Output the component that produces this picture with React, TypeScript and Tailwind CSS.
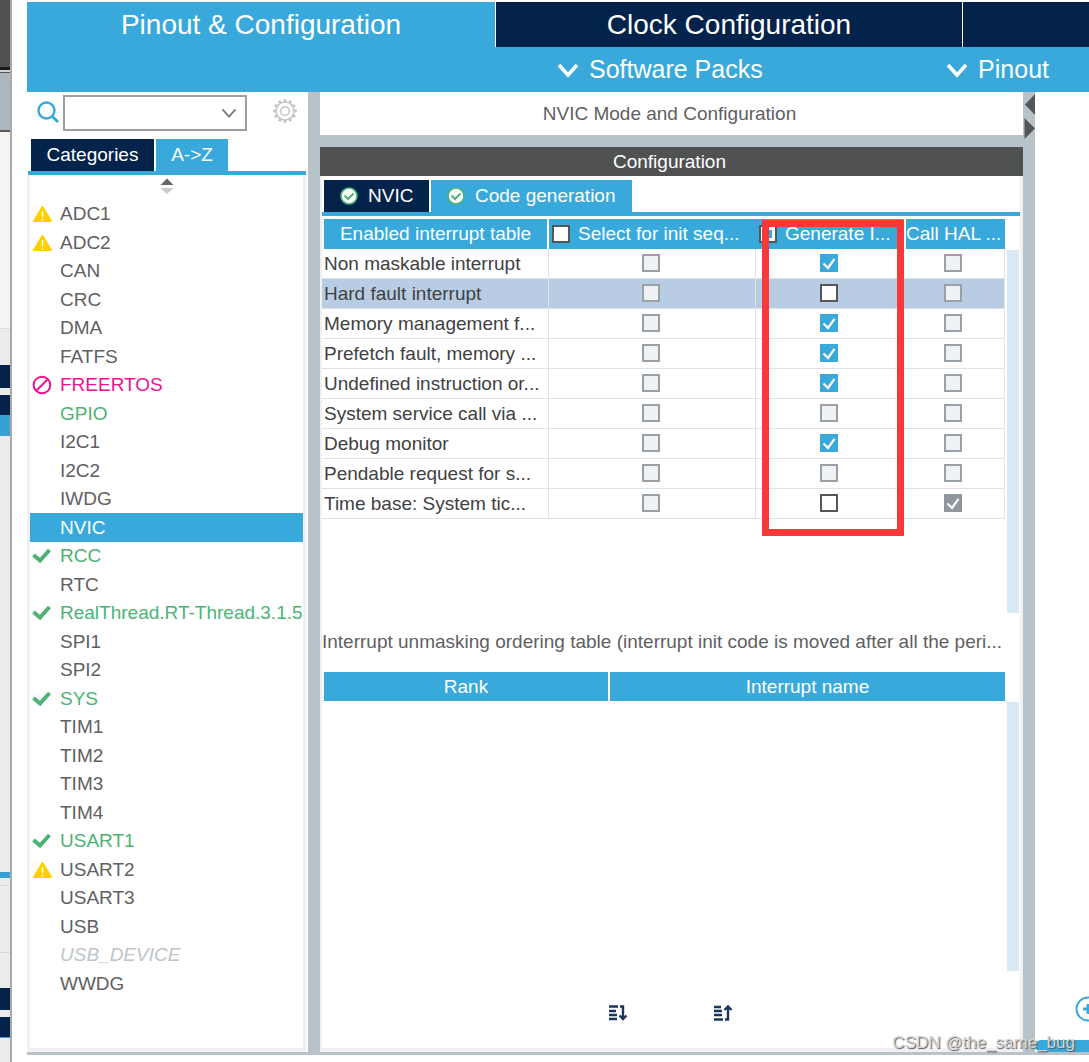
import React from "react";

type Mark = "warn" | "ok" | "no";
type Peripheral = { name: string; mark?: Mark; tone?: string };

const peripherals: Peripheral[] = [
  { name: "ADC1", mark: "warn" },
  { name: "ADC2", mark: "warn" },
  { name: "CAN" },
  { name: "CRC" },
  { name: "DMA" },
  { name: "FATFS" },
  { name: "FREERTOS", mark: "no", tone: "text-[#ec1390]" },
  { name: "GPIO", tone: "text-[#4db374]" },
  { name: "I2C1" },
  { name: "I2C2" },
  { name: "IWDG" },
  { name: "NVIC", tone: "bg-[#39a9dc] text-white" },
  { name: "RCC", mark: "ok", tone: "text-[#4db374]" },
  { name: "RTC" },
  { name: "RealThread.RT-Thread.3.1.5", mark: "ok", tone: "text-[#4db374]" },
  { name: "SPI1" },
  { name: "SPI2" },
  { name: "SYS", mark: "ok", tone: "text-[#4db374]" },
  { name: "TIM1" },
  { name: "TIM2" },
  { name: "TIM3" },
  { name: "TIM4" },
  { name: "USART1", mark: "ok", tone: "text-[#4db374]" },
  { name: "USART2", mark: "warn" },
  { name: "USART3" },
  { name: "USB" },
  { name: "USB_DEVICE", tone: "italic text-[#bcc5ca]" },
  { name: "WWDG" },
];

type Box = "on" | "off" | "dim" | "dimOn";
const interrupts: { name: string; boxes: [Box, Box, Box] }[] = [
  { name: "Non maskable interrupt", boxes: ["dim", "on", "dim"] },
  { name: "Hard fault interrupt", boxes: ["dim", "off", "dim"] },
  { name: "Memory management f...", boxes: ["dim", "on", "dim"] },
  { name: "Prefetch fault, memory ...", boxes: ["dim", "on", "dim"] },
  { name: "Undefined instruction or...", boxes: ["dim", "on", "dim"] },
  { name: "System service call via ...", boxes: ["dim", "dim", "dim"] },
  { name: "Debug monitor", boxes: ["dim", "on", "dim"] },
  { name: "Pendable request for s...", boxes: ["dim", "dim", "dim"] },
  { name: "Time base: System tic...", boxes: ["dim", "off", "dimOn"] },
];
const columnNames = ["Select for init sequence ordering", "Generate IRQ handler", "Call HAL handler"];

function MarkIcon({ mark }: { mark?: Mark }) {
  if (mark === "warn")
    return (
      <svg viewBox="0 0 20 18" className="h-[18px] w-5" aria-hidden="true">
        <path d="M10.500 2 L19 16 H2 Z" fill="#ffd000" stroke="#ffd000" strokeWidth="2" strokeLinejoin="round" />
        <path d="M10.500 6 V12 M10.500 13.500 V15.500" stroke="#fff" strokeWidth="1.4" />
      </svg>
    );
  if (mark === "ok")
    return (
      <svg viewBox="0 0 20 18" className="h-[18px] w-5" aria-hidden="true">
        <path d="M1.500 8 L8 13.500 L17.500 3" fill="none" stroke="#4db374" strokeWidth="4" />
      </svg>
    );
  if (mark === "no")
    return (
      <svg viewBox="0 0 20 20" className="h-5 w-5" aria-hidden="true">
        <circle cx="10" cy="10" r="8.3" fill="none" stroke="#ec1390" strokeWidth="2" />
        <path d="M4.500 15.500 L15.500 4.500" stroke="#ec1390" strokeWidth="2" />
      </svg>
    );
  return null;
}

function CheckBox({ kind, label }: { kind: Box; label: string }) {
  const on = kind === "on" || kind === "dimOn";
  const look =
    kind === "on"
      ? "border-[#39a9dc] bg-[#39a9dc]"
      : kind === "off"
        ? "border-[#555657] bg-white"
        : kind === "dim"
          ? "border-[#9aa1a6] bg-[#f0f1f4]"
          : "border-[#8f979e] bg-[#8f979e]";
  return (
    <span className="inline-grid align-middle">
      <input
        type="checkbox"
        aria-label={label}
        defaultChecked={on}
        disabled={kind === "dim" || kind === "dimOn"}
        className={`col-start-1 row-start-1 size-[18px] appearance-none border-2 ${look}`}
      />
      {on && (
        <svg viewBox="0 0 18 18" className="pointer-events-none col-start-1 row-start-1 size-[18px]" aria-hidden="true">
          <path d="M3.5 9.5 L8 14 L14.5 4.8" fill="none" stroke="#fff" strokeWidth="2.2" />
        </svg>
      )}
    </span>
  );
}

function Chevron({ className, thin }: { className: string; thin?: boolean }) {
  return (
    <svg viewBox="0 0 22 16" className={className} aria-hidden="true">
      <path d="M2 3 L11 13 L20 3" fill="none" stroke="currentColor" strokeWidth={thin ? 2.6 : 3.6} />
    </svg>
  );
}

function TabSeal() {
  return (
    <svg viewBox="0 0 18 18" className="size-[18px]" aria-hidden="true">
      <circle cx="9" cy="9" r="8" fill="#fff" stroke="#4db374" strokeWidth="1.6" />
      <path d="M4.5 8.5 L8 12 L13.5 6.5" fill="none" stroke="#4db374" strokeWidth="2" />
    </svg>
  );
}

function Gear() {
  const teeth = Array.from({ length: 12 }, (_, i) => i * 30);
  return (
    <svg viewBox="0 0 24 24" className="size-6" fill="none" stroke="#c6c6c6" strokeWidth="1.6" aria-hidden="true">
      <circle cx="12" cy="12" r="9" />
      <circle cx="12" cy="12" r="4.3" />
      {teeth.map((a) => (
        <path key={a} d="M12 3 V0.2" strokeWidth="2.8" transform={`rotate(${a} 12 12)`} />
      ))}
    </svg>
  );
}

function WindowBehind() {
  return (
    <div className="flex w-3 flex-none flex-col border-r-2 border-[#a9a9a9] bg-[#ececec]" aria-hidden="true">
      <div className="h-[67px] bg-[#505251]" />
      <div className="h-[3px] bg-[#1b1b1b]" />
      <div className="h-[3px] border-b border-[#555] bg-[#d0d0d0]" />
      <div className="h-[57px] bg-[#adb7bf]" />
      <div className="h-[2px] bg-[#5a5a5a]" />
      <div className="h-[197px] border-b border-[#dcdcdc] bg-[#f4f4f4]" />
      <div className="h-9" />
      <div className="h-[23px] bg-[#03234b]" />
      <div className="h-[7px]" />
      <div className="h-5 bg-[#03234b]" />
      <div className="h-[21px] bg-[#39a0d3]" />
      <div className="h-[436px]" />
      <div className="h-1.5 bg-[#39a0d3]" />
      <div className="h-2 border-b border-[#d8d8d8]" />
      <div className="h-[67px] border-b border-[#d8d8d8]" />
      <div className="h-[35px]" />
      <div className="h-[22px] bg-[#03234b]" />
      <div className="h-[7px]" />
      <div className="h-[21px] border-b border-[#39a0d3] bg-[#03234b]" />
    </div>
  );
}

function Header() {
  return (
    <header className="flex-none bg-[#39a9dc] text-white">
      <nav className="flex h-[45px] text-[28px] leading-[45px]">
        <button className="w-[468px] flex-none">Pinout &amp; Configuration</button>
        <button className="w-[468px] flex-none border-x border-white bg-[#03234b]">Clock Configuration</button>
        <div className="flex-1 bg-[#03234b]" />
      </nav>
      <div className="flex h-[45px] items-center text-[25px] leading-[45px]">
        <button className="ml-[530px] flex items-center gap-2.5">
          <Chevron className="h-4 w-[22px]" />
          Software Packs
        </button>
        <button className="ml-auto mr-10 flex items-center gap-2.5">
          <Chevron className="h-4 w-[22px]" />
          Pinout
        </button>
      </div>
    </header>
  );
}

function Sidebar() {
  return (
    <aside className="flex w-[281px] flex-none flex-col pr-0.5">
      <div className="flex h-[47px] items-start pl-2.5 pt-[3px]">
        <svg viewBox="0 0 22 22" className="mt-1.5 size-[22px]" fill="none" stroke="#39a9dc" aria-hidden="true">
          <circle cx="9.5" cy="9.5" r="8" strokeWidth="2.4" />
          <path d="M15 15 L21 21" strokeWidth="3" />
        </svg>
        <div className="relative ml-1 w-[184px]">
          <select aria-label="Search peripherals" className="block h-9 w-full appearance-none border-2 border-[#9aa1a6] bg-white" />
          <Chevron thin className="pointer-events-none absolute right-2.5 top-2.5 h-4 w-4 text-[#7d7d7d]" />
        </div>
        <button aria-label="Settings" className="ml-[26px] mt-1">
          <Gear />
        </button>
      </div>
      <div className="flex h-8 gap-0.5 pl-1 text-white">
        <button className="w-[123px] bg-[#03234b]">Categories</button>
        <button className="w-[72px] bg-[#39a9dc]">A-&gt;Z</button>
      </div>
      <div className="ml-px h-1 bg-[#39a9dc]" />
      <div className="flex-1 border-x-3 border-b-4 border-[#f0f1f3]">
        <button aria-label="Sort" className="mx-auto block h-[25px] pb-1">
          <svg viewBox="0 0 14 18" className="h-[18px] w-3.5" aria-hidden="true">
            <path d="M7 1.5 L13.5 8 H0.5 Z" fill="#666" />
            <path d="M0.5 11 H13.5 L7 17 Z" fill="#c9c9c9" />
          </svg>
        </button>
        <ul>
          {peripherals.map((p) => (
            <li key={p.name} className="odd:h-7 even:h-[29px]">
              <button className={`flex h-full w-full items-center whitespace-nowrap pl-0.5 text-left ${p.tone ?? "text-[#5f6062]"}`}>
                <span className="flex w-7 flex-none">
                  <MarkIcon mark={p.mark} />
                </span>
                {p.name}
              </button>
            </li>
          ))}
        </ul>
      </div>
    </aside>
  );
}

function InterruptTable() {
  return (
    <table className="w-full table-fixed border-separate border-spacing-0 whitespace-nowrap">
      <colgroup>
        <col className="w-[227px]" />
        <col className="w-[207px]" />
        <col className="w-[148px]" />
        <col className="w-[101px]" />
      </colgroup>
      <thead className="text-white">
        <tr className="h-[30px]">
          <th className="border-x-2 border-white bg-[#39a9dc] p-0 font-normal">Enabled interrupt table</th>
          <th className="bg-[#39a9dc] p-0 font-normal">
            <label className="flex items-center gap-2 pl-[3px]">
              <input type="checkbox" className="size-[18px] flex-none appearance-none border-2 border-[#555657] bg-white" />
              Select for init seq...
            </label>
          </th>
          <th className="relative bg-[#39a9dc] p-0 font-normal">
            <label className="flex items-center gap-2 pl-[3px]">
              <span className="inline-grid flex-none place-items-center">
                <input type="checkbox" className="col-start-1 row-start-1 size-[18px] appearance-none border-2 border-[#555657] bg-white" />
                <span className="pointer-events-none col-start-1 row-start-1 size-2 bg-[#39a9dc]" />
              </span>
              Generate I...
            </label>
            <div className="pointer-events-none absolute left-1.5 right-0 top-px z-10 h-[316px] border-7 border-[#fb3838]" />
          </th>
          <th className="border-l-2 border-white bg-[#39a9dc] p-0 text-left font-normal">Call HAL ...</th>
        </tr>
      </thead>
      <tbody className="text-[#404143]">
        {interrupts.map((row, i) => (
          <tr key={row.name} className={`h-[30px] ${i === 1 ? "bg-[#b8cde4]" : "bg-white"}`}>
            <td className="border-b border-r border-[#dfe3e8] py-0 pl-0.5 pr-0">{row.name}</td>
            {row.boxes.map((kind, c) => (
              <td key={c} className="border-b border-r border-[#dfe3e8] p-0 pb-0.5 pr-0.5 text-center leading-none">
                <CheckBox kind={kind} label={`${columnNames[c]}: ${row.name}`} />
              </td>
            ))}
          </tr>
        ))}
      </tbody>
    </table>
  );
}

function SortIcon({ up }: { up?: boolean }) {
  return (
    <svg viewBox="0 0 20 18" className="h-[18px] w-5" fill="none" stroke="#1b365d" aria-hidden="true">
      <path d={up ? "M0 3 H7 M0 7 H8 M0 11 H8 M0 15.5 H9" : "M0 2.5 H9 M0 7 H7 M0 11 H8 M0 15 H8"} strokeWidth="2.4" />
      {up ? (
        <path d="M11 15.5 H14 V3 M10.5 6 L14 2.500 L17.500 6" strokeWidth="2.4" />
      ) : (
        <path d="M11 2.500 H14 V14 M10.500 11.500 L14 15 L17.500 11.500" strokeWidth="2.4" />
      )}
    </svg>
  );
}

function Workspace() {
  return (
    <main className="flex min-w-0 flex-1 flex-col bg-[#b7c3c9]">
      <h1 className="h-[43px] flex-none bg-white pr-1 text-center leading-[43px] text-[#5f6062]">NVIC Mode and Configuration</h1>
      <h2 className="mt-3 h-[29px] flex-none bg-[#505251] pr-1 text-center leading-[29px] text-white">Configuration</h2>
      <div className="flex flex-1 flex-col border-b-4 border-l-2 border-r-3 border-[#f0f1f3] bg-white">
        <div className="flex h-9 gap-0.5 pl-0.5 pt-1 text-white">
          <button className="flex w-[105px] items-center gap-2.5 bg-[#03234b] pl-4">
            <TabSeal />
            NVIC
          </button>
          <button className="flex w-[201px] items-center gap-2.5 bg-[#39a9dc] pl-4">
            <TabSeal />
            Code generation
          </button>
        </div>
        <div className="h-1 bg-[#39a9dc]" />
        <div className="flex grow basis-[397px] pr-px pt-[3px]">
          <div className="min-w-0 flex-1">
            <InterruptTable />
          </div>
          <div className="ml-0.5 mt-[31px] w-3 flex-none bg-[#d9e8f5]" />
        </div>
        <p className="h-[59px] flex-none truncate leading-[58px] text-[#5f6062]">
          Interrupt unmasking ordering table (interrupt init code is moved after all the peri...
        </p>
        <div className="flex grow basis-[299px] pr-px">
          <div className="min-w-0 flex-1">
            <table className="w-full table-fixed border-separate border-spacing-0 text-white">
              <colgroup>
                <col className="w-[288px]" />
                <col className="w-[395px]" />
              </colgroup>
              <thead>
                <tr className="h-[29px]">
                  <th className="border-x-2 border-white bg-[#39a9dc] p-0 font-normal">Rank</th>
                  <th className="bg-[#39a9dc] p-0 font-normal">Interrupt name</th>
                </tr>
              </thead>
            </table>
          </div>
          <div className="ml-0.5 mt-[30px] w-3 flex-none bg-[#d9e8f5]" />
        </div>
        <div className="flex h-[77px] flex-none items-center justify-center gap-[85px] pb-px pt-2">
          <button aria-label="Move down">
            <SortIcon />
          </button>
          <button aria-label="Move up">
            <SortIcon up />
          </button>
        </div>
      </div>
    </main>
  );
}

export default function App() {
  return (
    <div className="relative flex min-h-screen overflow-hidden bg-white font-['Liberation_Sans',Arial,sans-serif] text-[19px] leading-7">
      <WindowBehind />
      <div className="ml-[15px] flex min-w-0 flex-1 flex-col pb-[7px] pt-0.5">
        <Header />
        <div className="flex flex-1 border-b-3 border-[#b7c3c9]">
          <Sidebar />
          <div className="w-3 flex-none bg-[#b7c3c9]" />
          <Workspace />
          <div className="flex w-3 flex-none flex-col items-end bg-[#b7c3c9] pt-0.5">
            <svg viewBox="0 0 12 46" className="h-[46px] w-3" fill="#555657" aria-hidden="true">
              <path d="M12 0 V21 L2 10.500 Z M1.500 24 V45 L12 34.500 Z" />
            </svg>
          </div>
          <section aria-label="Pinout view" className="-mb-[3px] flex w-[54px] flex-none flex-col justify-end overflow-hidden bg-white pb-[3px]">
            <button aria-label="Zoom in" className="mb-[18px] ml-10 w-[26px]">
              <svg viewBox="0 0 26 26" className="size-[26px]" fill="none" stroke="#39a9dc" aria-hidden="true">
                <circle cx="13" cy="13" r="11.500" strokeWidth="2" />
                <path d="M13 8 V18 M8 13 H18" strokeWidth="3" />
              </svg>
            </button>
            <div className="h-3 rounded-l-md bg-[#39a9dc]" />
            <div className="-mb-[3px] h-[3px] bg-[#b7c3c9]" />
          </section>
        </div>
      </div>
      <div className="pointer-events-none absolute bottom-[7px] right-3.5 text-[17px] leading-6 text-[#d6d6d6] [text-shadow:1px_1px_1px_#555]">
        CSDN @the_same_bug
      </div>
    </div>
  );
}
